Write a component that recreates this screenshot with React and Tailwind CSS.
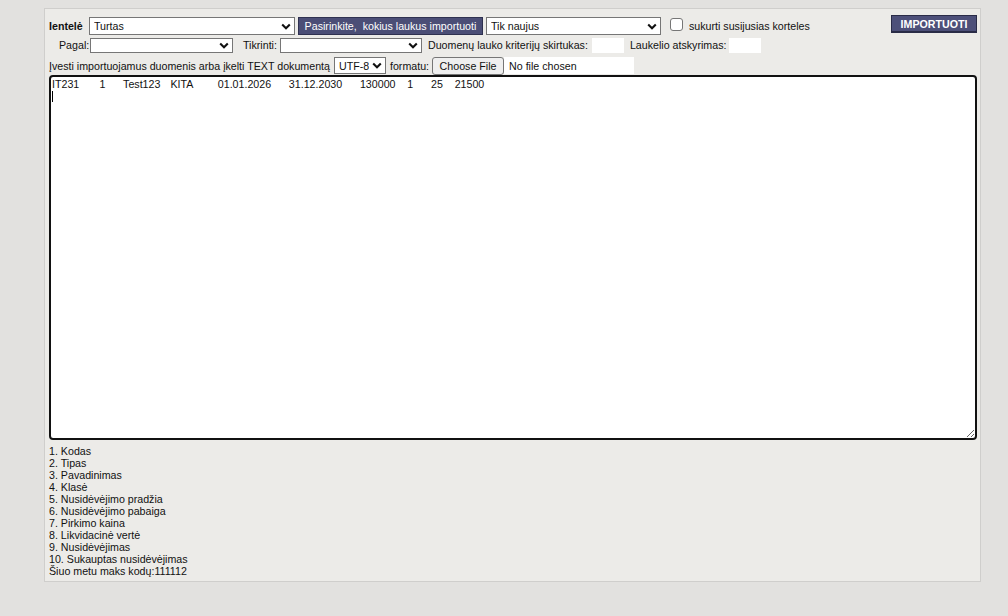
import React from "react";

const FONT = { fontFamily: '"Liberation Sans", Arial, sans-serif' };

const ROW =
  "IT231\t1\tTest123\tKITA\t01.01.2026\t31.12.2030\t130000\t1\t25\t21500\n";

const FIELDS = [
  "1. Kodas",
  "2. Tipas",
  "3. Pavadinimas",
  "4. Klasė",
  "5. Nusidėvėjimo pradžia",
  "6. Nusidėvėjimo pabaiga",
  "7. Pirkimo kaina",
  "8. Likvidacinė vertė",
  "9. Nusidėvėjimas",
  "10. Sukauptas nusidėvėjimas",
];

function Chevron() {
  return (
    <svg width="10" height="7" viewBox="0 0 10 7" className="shrink-0">
      <path d="M1.2 1.5 5 5.2 8.8 1.5" stroke="#111" strokeWidth="2.1" fill="none" />
    </svg>
  );
}

// plain-looking dropdown box
function Select({ value = "", className = "" }) {
  return (
    <div
      className={`flex items-center justify-between border border-[#767676] bg-white pl-[4px] pr-[3px] text-[#111] ${className}`}
    >
      <span className="truncate">{value}</span>
      <Chevron />
    </div>
  );
}

export default function App() {
  return (
    <div
      className="min-h-[616px] w-full bg-[#e2e1df] pt-[8px] text-[10.67px] leading-[12px] text-[#111]"
      style={FONT}
    >
      <div className="ml-[44px] w-[937px] border border-[#cfcecc] bg-[#ecebe8] pl-[4px] pr-[3px] pt-[6px] pb-[4px]">
        {/* top row: table choice, field picker, mode */}
        <div className="flex items-start">
          <span className="mt-[5px] w-[40px] font-bold">Ientelė</span>
          <Select value="Turtas" className="mt-[2px] h-[18px] w-[206px]" />
          <button className="ml-[3px] mt-[2px] h-[18px] w-[185px] border border-[#2f3150] bg-[#4b4e76] text-white">
            Pasirinkite,&nbsp; kokius laukus importuoti
          </button>
          <Select value="Tik naujus" className="ml-[3px] mt-[2px] h-[18px] w-[175px]" />
          <span className="ml-[9px] mt-[3px] h-[13px] w-[13px] rounded-[3px] border border-[#767676] bg-white" />
          <span className="ml-[6px] mt-[5px]">sukurti susijusias korteles</span>
          <button className="ml-auto h-[18px] w-[86px] border border-[#2a2c47] border-b-[2px] bg-[#4d5079] font-bold text-white">
            IMPORTUOTI
          </button>
        </div>

        {/* second row: match settings and separators */}
        <div className="mt-[2px] flex h-[16px] items-center">
          <span className="ml-[10px] w-[31px]">Pagal:</span>
          <Select className="h-[15px] w-[143px]" />
          <span className="ml-[10px] w-[37px]">Tikrinti:</span>
          <Select className="h-[15px] w-[142px]" />
          <span className="ml-[6px]">Duomenų lauko kriterijų skirtukas:</span>
          <span className="ml-[4px] h-[15px] w-[32px] bg-white" />
          <span className="ml-[6px]">Laukelio atskyrimas:</span>
          <span className="ml-[3px] h-[15px] w-[32px] bg-white" />
        </div>

        {/* third row: encoding and file upload */}
        <div className="mt-[4px] flex h-[17px] items-center">
          <span>Įvesti importuojamus duomenis arba įkelti TEXT dokumentą</span>
          <Select value="UTF-8" className="ml-[4px] h-[17px] w-[52px]" />
          <span className="ml-[4px]">formatu:</span>
          <span className="ml-[3px] flex h-[18px] w-[72px] items-center justify-center rounded-[3px] border border-[#767676] bg-[#efefef]">
            Choose File
          </span>
          <span className="flex h-[17px] w-[130px] items-center bg-white pl-[5px]">No file chosen</span>
        </div>

        <div className="relative mt-[1px]">
          <textarea
            readOnly
            defaultValue={ROW}
            className="block h-[365px] w-[928px] rounded-[4px] border-2 border-[#111] bg-white px-[1px] pt-[1px] text-[10.67px] leading-[12px] text-[#111] outline-none [tab-size:8]"
            style={FONT}
          />
          <span className="absolute left-[3px] top-[16px] h-[11px] w-[1px] bg-black" />
        </div>

        <div className="mt-[5px]">
          {FIELDS.map((f) => (
            <div key={f}>{f}</div>
          ))}
          <div>Šiuo metu maks kodų:111112</div>
        </div>
      </div>
    </div>
  );
}
